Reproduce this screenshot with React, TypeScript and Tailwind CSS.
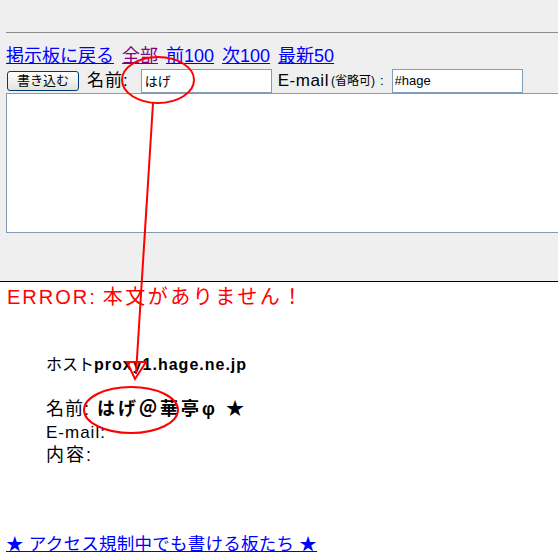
import React from 'react';

const jp = { fontFamily: '"Liberation Sans", "Noto Sans CJK JP", sans-serif' };

export default function App() {
  return (
    <div className="relative w-full min-h-[559px] bg-white text-black overflow-hidden" style={jp}>
      {/* ---------- posting form (grey) ---------- */}
      <div className="bg-[#efefef] h-[282px] border-b border-black pt-[32px] pl-[6px]">
        <div className="border-t border-[#8c8c8c] h-0" />

        <div className="mt-[12px] flex items-center gap-[8px] text-[18px] leading-[22px]">
          <a href="#" className="text-[#0000ff] underline">掲示板に戻る</a>
          <a href="#" className="text-[#800080] underline">全部</a>
          <a href="#" className="text-[#0000ff] underline">前100</a>
          <a href="#" className="text-[#0000ff] underline">次100</a>
          <a href="#" className="text-[#0000ff] underline">最新50</a>
        </div>

        <div className="mt-[1px] flex items-center h-[25px]">
          <button className="ml-[1px] w-[72px] h-[20px] rounded-[3px] border border-[#003c74] bg-gradient-to-b from-white to-[#e3e3db] text-[13px] leading-none">
            書き込む
          </button>
          <span className="ml-[8px] text-[17px] tracking-[1px]">名前:</span>
          <input
            className="ml-[12px] w-[131px] h-[24px] border border-[#7f9db9] bg-white px-[3px] text-[13px] outline-none"
            defaultValue="はげ"
          />
          <span className="ml-[6px] text-[17px] tracking-[0.5px]">E-mail</span>
          <span className="text-[12px] ml-[2px]">(省略可)</span>
          <span className="ml-[5px] text-[13px]">:</span>
          <input
            className="ml-[8px] w-[131px] h-[24px] border border-[#7f9db9] bg-white px-[2px] text-[13px] outline-none"
            defaultValue="#hage"
          />
        </div>

        <textarea className="block mt-[0px] w-[560px] h-[140px] border border-[#7f9db9] bg-white resize-none outline-none" />
      </div>

      {/* ---------- result ---------- */}
      <div className="pl-[6px]">
        <div className="text-[20px] leading-[30px] text-[#ff0000]">
          <span className="ml-[1px] tracking-[2px]">ERROR:</span>
          <span className="ml-[6px] tracking-[2.5px]">本文がありません！</span>
        </div>

        <div className="ml-[40px] mt-[41px] text-[18px] leading-[23px]">
          <div>
            <span className="text-[16px]">ホスト</span>
            <b className="text-[16px] tracking-[1px]">proxy1.hage.ne.jp</b>
          </div>
          <div className="mt-[22px]">
            <span className="tracking-[1px]">名前:</span>
            <b className="ml-[7px] tracking-[3px]">はげ＠華亭φ ★</b>
          </div>
          <div className="text-[17px] tracking-[1px]">E-mail:</div>
          <div className="tracking-[2px]">内容:</div>
        </div>

        <div className="mt-[66px] text-[17.5px] leading-[22px] tracking-[0.25px]">
          <a href="#" className="text-[#0000ff] underline">★ アクセス規制中でも書ける板たち ★</a>
        </div>
      </div>

      {/* ---------- red annotation ---------- */}
      <svg className="absolute inset-0 pointer-events-none" width="558" height="559" viewBox="0 0 558 559">
        <ellipse cx="158" cy="80" rx="36" ry="23" fill="none" stroke="#ff0000" strokeWidth="2" />
        <line x1="153" y1="103" x2="136" y2="374" stroke="#ff0000" strokeWidth="2" />
        <polygon points="127,362 146,362 135,379" fill="none" stroke="#ff0000" strokeWidth="2" />
        <ellipse cx="131" cy="410" rx="47" ry="23" fill="none" stroke="#ff0000" strokeWidth="2" />
      </svg>
    </div>
  );
}
